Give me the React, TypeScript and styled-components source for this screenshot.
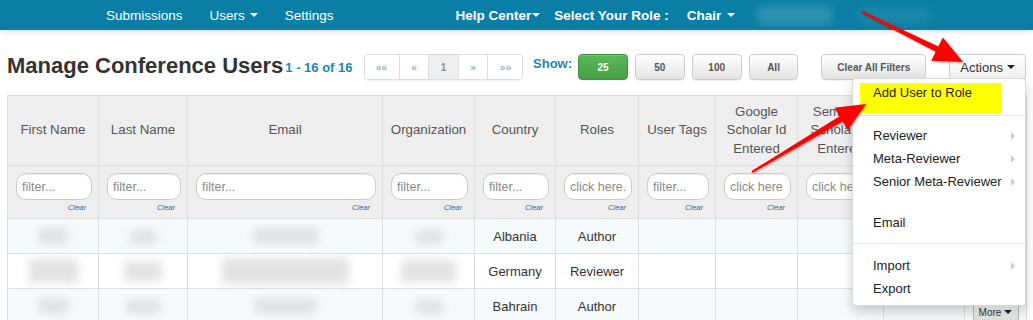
import React from 'react';
import styled, { createGlobalStyle } from 'styled-components';

const GlobalStyle = createGlobalStyle`
  html, body { margin: 0; padding: 0; background: #fff; }
  body {
    font-family: "Liberation Sans", Arial, sans-serif;
    color: #333;
    width: 1033px;
    height: 320px;
    overflow: hidden;
  }
`;

const Page = styled.div`
  position: relative;
  width: 1033px;
  height: 320px;
  overflow: hidden;
`;

/* ---------- Navbar ---------- */
const NavBar = styled.nav`
  height: 30px;
  background: #0a7ea4;
  display: flex;
  align-items: center;
  padding-left: 106px;
  box-shadow: 0 2px 5px rgba(0, 0, 0, 0.12);
  position: relative;
  z-index: 1;
`;

const NavItem = styled.span<{ $bold?: boolean; $ml?: number }>`
  color: #fff;
  font-size: 13.5px;
  font-weight: ${(p) => (p.$bold ? 700 : 400)};
  margin-left: ${(p) => p.$ml ?? 0}px;
  display: inline-flex;
  align-items: center;
  white-space: nowrap;
`;

const Caret = styled.span<{ $color?: string; $gap?: number }>`
  display: inline-block;
  width: 0;
  height: 0;
  border-left: 4px solid transparent;
  border-right: 4px solid transparent;
  border-top: 4px solid ${(p) => p.$color ?? '#fff'};
  margin-left: ${(p) => p.$gap ?? 5}px;
`;

const NavBlur = styled.span<{ $w: number; $ml: number; $a: number }>`
  display: inline-block;
  width: ${(p) => p.$w}px;
  height: 18px;
  margin-left: ${(p) => p.$ml}px;
  background: rgba(255, 255, 255, ${(p) => p.$a});
  filter: blur(4px);
  border-radius: 4px;
`;

/* ---------- Toolbar ---------- */
const Toolbar = styled.div`
  display: flex;
  align-items: center;
  height: 26px;
  margin: 24px 7px 0 7px;
`;

const Title = styled.h1`
  margin: 0;
  font-size: 22px;
  font-weight: 700;
  line-height: 24px;
  color: #333;
  align-self: flex-start;
  white-space: nowrap;
`;

const Count = styled.span`
  margin-left: 2px;
  font-size: 13px;
  font-weight: 700;
  color: #1b87b4;
  white-space: nowrap;
`;

const Pager = styled.div`
  display: flex;
  margin-left: 11px;
  height: 26px;
  border: 1px solid #ddd;
  border-radius: 4px;
  box-sizing: border-box;
  box-shadow: 0 1px 2px rgba(0, 0, 0, 0.06);
  overflow: hidden;
`;

const PageCell = styled.span<{ $current?: boolean }>`
  display: flex;
  align-items: center;
  justify-content: center;
  padding: 0 11.5px;
  font-size: 10px;
  font-weight: ${(p) => (p.$current ? 700 : 400)};
  color: ${(p) => (p.$current ? '#888' : '#5c9fc6')};
  background: ${(p) => (p.$current ? '#eee' : '#fff')};
  & + & { border-left: 1px solid #ddd; }
`;

const ShowLabel = styled.span`
  margin-left: 10px;
  align-self: flex-start;
  line-height: 20px;
  font-size: 13px;
  font-weight: 700;
  color: #1b87b4;
`;

const Btn = styled.button<{ $active?: boolean; $w: number; $ml: number; $large?: boolean }>`
  width: ${(p) => p.$w}px;
  height: 26px;
  margin-left: ${(p) => p.$ml}px;
  padding: 0;
  box-sizing: border-box;
  border-radius: 4px;
  border: 1px solid ${(p) => (p.$active ? '#3e8f3e' : '#ccc')};
  background: ${(p) =>
    p.$active
      ? 'linear-gradient(#5cb85c, #43a043)'
      : p.$large
      ? 'linear-gradient(#fff, #f1f1f1)'
      : 'linear-gradient(#fff, #e3e3e3)'};
  color: ${(p) => (p.$active ? '#fff' : p.$large ? '#333' : '#555')};
  font-family: "Liberation Sans", Arial, sans-serif;
  font-size: ${(p) => (p.$large ? 13 : 10)}px;
  font-weight: ${(p) => (p.$large ? 400 : 700)};
  display: inline-flex;
  align-items: center;
  justify-content: center;
  box-shadow: inset 0 1px 0 rgba(255, 255, 255, 0.15), 0 1px 1px rgba(0, 0, 0, 0.05);
`;

/* ---------- Table ---------- */
const Table = styled.table`
  margin: 15px 7px 0 7px;
  width: 1019px;
  border-collapse: collapse;
  table-layout: fixed;
`;

const Col = styled.col<{ $w: number }>`
  width: ${(p) => p.$w}px;
`;

const HeadRow = styled.tr`
  height: 70px;
`;

const Th = styled.th`
  background: #eee;
  border: 1px solid #ddd;
  color: #555;
  font-size: 13.3px;
  font-weight: 400;
  line-height: 18.5px;
  padding: 0 7px;
  text-align: center;
  vertical-align: middle;
`;

const FilterRow = styled.tr`
  height: 53px;
`;

const FilterTd = styled.td`
  background: #eee;
  border: 1px solid #ddd;
  padding: 7px 6px 0 8px;
  vertical-align: top;
`;

const FilterInput = styled.input`
  display: block;
  width: 100%;
  height: 27px;
  box-sizing: border-box;
  border: 1px solid #ccc;
  border-radius: 10px;
  padding: 0 5px;
  font-family: "Liberation Sans", Arial, sans-serif;
  font-size: 12.5px;
  color: #555;
  background: #fff;
  box-shadow: inset 0 1px 1px rgba(0, 0, 0, 0.075);
  &::placeholder { color: #8a8a8a; }
`;

const ClearLink = styled.span`
  display: block;
  text-align: right;
  padding-right: 6px;
  margin-top: 3px;
  font-size: 7.5px;
  line-height: 9px;
  font-style: italic;
  color: #2a6496;
`;

const DataRow = styled.tr<{ $alt?: boolean }>`
  height: 35px;
  background: ${(p) => (p.$alt ? '#f5fafd' : '#fff')};
`;

const Td = styled.td`
  border: 1px solid #ddd;
  text-align: center;
  vertical-align: middle;
  font-size: 13px;
  color: #333;
  padding: 0 4px;
  white-space: nowrap;
`;

const MoreTd = styled(Td)`
  vertical-align: top;
  padding-top: 14px;
`;

const Blur = styled.span<{ $w: number; $h: number }>`
  display: inline-block;
  vertical-align: middle;
  width: ${(p) => p.$w}px;
  height: ${(p) => p.$h}px;
  background: #dadada;
  filter: blur(4px);
  opacity: 0.75;
`;

const MoreBtn = styled.span`
  display: inline-flex;
  align-items: center;
  justify-content: center;
  width: 46px;
  height: 18px;
  box-sizing: border-box;
  border: 1px solid #bbb;
  border-radius: 3px;
  background: linear-gradient(#fff, #e0e0e0);
  font-size: 10px;
  color: #333;
`;

/* ---------- Dropdown menu ---------- */
const Menu = styled.div`
  position: absolute;
  left: 852px;
  top: 78px;
  width: 174px;
  box-sizing: border-box;
  padding: 4px 0 5px 0;
  background: #fff;
  border: 1px solid rgba(0, 0, 0, 0.15);
  border-radius: 4px;
  box-shadow: 0 6px 12px rgba(0, 0, 0, 0.18);
  z-index: 5;
`;

const Highlight = styled.div`
  margin-left: 7px;
  width: 141px;
  height: 30px;
  box-sizing: border-box;
  padding-left: 13px;
  background: #ffff00;
  font-size: 13px;
  line-height: 20px;
  color: #222;
`;

const Divider = styled.div<{ $mt: number; $mb: number }>`
  height: 1px;
  background: #e5e5e5;
  margin: ${(p) => p.$mt}px 0 ${(p) => p.$mb}px 0;
`;

const MenuItem = styled.div`
  display: flex;
  align-items: center;
  justify-content: space-between;
  height: 23px;
  padding: 0 10px 0 20px;
  font-size: 13px;
  color: #222;
  white-space: nowrap;
`;

const Spacer = styled.div<{ $h: number }>`
  height: ${(p) => p.$h}px;
`;

const SubArrow = styled.span`
  width: 0;
  height: 0;
  border-top: 4px solid transparent;
  border-bottom: 4px solid transparent;
  border-left: 4px solid #ccc;
`;

/* ---------- Annotation arrows ---------- */
const Overlay = styled.svg`
  position: absolute;
  left: 0;
  top: 0;
  z-index: 10;
  pointer-events: none;
  filter: drop-shadow(1px 1px 1px rgba(0, 0, 0, 0.35));
`;

type Pt = [number, number];

function arrowPoints(t: Pt, p: Pt, tailW: number, shaftW: number, headL: number, headW: number) {
  const dx = p[0] - t[0];
  const dy = p[1] - t[1];
  const len = Math.hypot(dx, dy);
  const d: Pt = [dx / len, dy / len];
  const n: Pt = [-d[1], d[0]];
  const b: Pt = [p[0] - d[0] * headL, p[1] - d[1] * headL];
  const pts: Pt[] = [
    [t[0] + n[0] * tailW / 2, t[1] + n[1] * tailW / 2],
    [b[0] + n[0] * shaftW / 2, b[1] + n[1] * shaftW / 2],
    [b[0] + n[0] * headW, b[1] + n[1] * headW],
    p,
    [b[0] - n[0] * headW, b[1] - n[1] * headW],
    [b[0] - n[0] * shaftW / 2, b[1] - n[1] * shaftW / 2],
    [t[0] - n[0] * tailW / 2, t[1] - n[1] * tailW / 2],
  ];
  return pts.map((q) => `${q[0].toFixed(1)},${q[1].toFixed(1)}`).join(' ');
}

/* ---------- Data ---------- */
const colWidths = [91, 89, 195, 92, 81, 83, 77, 82, 86, 81, 62];

const headers: string[] = [
  'First Name',
  'Last Name',
  'Email',
  'Organization',
  'Country',
  'Roles',
  'User Tags',
  'Google Scholar Id Entered',
  'Semantic Scholar Id Entered',
  '',
  '',
];

const placeholders = [
  'filter...', 'filter...', 'filter...', 'filter...', 'filter...',
  'click here.', 'filter...', 'click here', 'click here', '', '',
];

type Row = { blurs: [number, number][]; country: string; role: string };
const rows: Row[] = [
  { blurs: [[30, 16], [27, 14], [65, 16], [28, 14]], country: 'Albania', role: 'Author' },
  { blurs: [[49, 24], [38, 20], [127, 26], [55, 22]], country: 'Germany', role: 'Reviewer' },
  { blurs: [[30, 16], [35, 14], [62, 16], [28, 14]], country: 'Bahrain', role: 'Author' },
];

export default function App() {
  return (
    <Page>
      <GlobalStyle />
      <NavBar>
        <NavItem>Submissions</NavItem>
        <NavItem $ml={27}>
          Users<Caret />
        </NavItem>
        <NavItem $ml={27}>Settings</NavItem>
        <NavItem $bold $ml={122}>
          Help Center<Caret $gap={1} />
        </NavItem>
        <NavItem $bold $ml={14}>Select Your Role :</NavItem>
        <NavItem $bold $ml={18}>
          Chair<Caret $gap={6} />
        </NavItem>
        <NavBlur $w={76} $ml={22} $a={0.16} />
        <NavBlur $w={70} $ml={27} $a={0.07} />
      </NavBar>

      <Toolbar>
        <Title>Manage Conference Users</Title>
        <Count>1 - 16 of 16</Count>
        <Pager>
          <PageCell>««</PageCell>
          <PageCell>«</PageCell>
          <PageCell $current>1</PageCell>
          <PageCell>»</PageCell>
          <PageCell>»»</PageCell>
        </Pager>
        <ShowLabel>Show:</ShowLabel>
        <Btn $active $w={50} $ml={6}>25</Btn>
        <Btn $w={50} $ml={7}>50</Btn>
        <Btn $w={50} $ml={7}>100</Btn>
        <Btn $w={50} $ml={7}>All</Btn>
        <Btn $w={105} $ml={23}>Clear All Filters</Btn>
        <Btn $large $w={77} $ml={23}>
          Actions<Caret $color="#222" $gap={4} />
        </Btn>
      </Toolbar>

      <Table>
        <colgroup>
          {colWidths.map((w, i) => (
            <Col key={i} $w={w} />
          ))}
        </colgroup>
        <thead>
          <HeadRow>
            {headers.map((h, i) => (
              <Th key={i}>{h}</Th>
            ))}
          </HeadRow>
          <FilterRow>
            {placeholders.map((ph, i) => (
              <FilterTd key={i}>
                {ph && (
                  <>
                    <FilterInput placeholder={ph} readOnly />
                    <ClearLink>Clear</ClearLink>
                  </>
                )}
              </FilterTd>
            ))}
          </FilterRow>
        </thead>
        <tbody>
          {rows.map((r, ri) => (
            <DataRow key={ri} $alt={ri % 2 === 0}>
              {r.blurs.map(([w, h], bi) => (
                <Td key={bi}>
                  <Blur $w={w} $h={h} />
                </Td>
              ))}
              <Td>{r.country}</Td>
              <Td>{r.role}</Td>
              <Td />
              <Td />
              <Td />
              <Td />
              {ri === 2 ? (
                <MoreTd>
                  <MoreBtn>
                    More<Caret $color="#222" $gap={3} />
                  </MoreBtn>
                </MoreTd>
              ) : (
                <Td />
              )}
            </DataRow>
          ))}
        </tbody>
      </Table>

      <Menu>
        <Highlight>Add User to Role</Highlight>
        <Divider $mt={2} $mb={8} />
        <MenuItem>
          Reviewer<SubArrow />
        </MenuItem>
        <MenuItem>
          Meta-Reviewer<SubArrow />
        </MenuItem>
        <MenuItem>
          Senior Meta-Reviewer<SubArrow />
        </MenuItem>
        <Spacer $h={18} />
        <MenuItem>Email</MenuItem>
        <Divider $mt={9} $mb={10} />
        <MenuItem>
          Import<SubArrow />
        </MenuItem>
        <MenuItem>Export</MenuItem>
      </Menu>

      <Overlay width={1033} height={320} viewBox="0 0 1033 320">
        <polygon points={arrowPoints([862, 12], [963, 62], 2, 6, 29, 13)} fill="#ff0000" />
        <polygon points={arrowPoints([752, 172], [866, 104], 2, 6, 29, 13)} fill="#ff0000" />
      </Overlay>
    </Page>
  );
}
